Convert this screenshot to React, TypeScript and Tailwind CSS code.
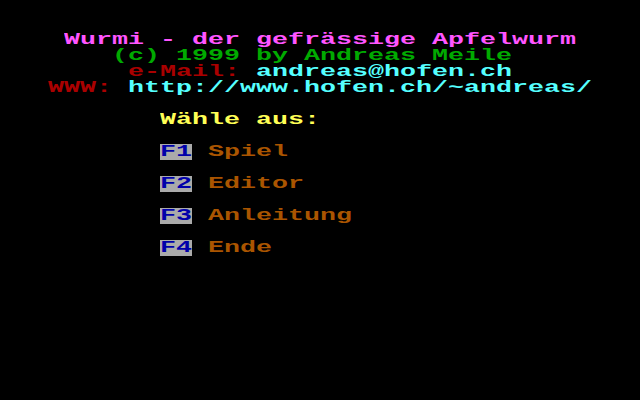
const Txt = ({ children, className = "" }: { children: React.ReactNode; className?: string }) => (
  <span
    className={`inline-block origin-left scale-x-[1.6667] whitespace-pre font-bold ${className}`}
  >
    {children}
  </span>
);

// one 16px text line of the 40x25 screen
const Row = ({ pad = "", children }: { pad?: string; children?: React.ReactNode }) => (
  <div className={`flex h-4 items-start leading-4 ${pad}`}>{children}</div>
);

const MENU = [
  { key: "F1", label: "Spiel" },
  { key: "F2", label: "Editor" },
  { key: "F3", label: "Anleitung" },
  { key: "F4", label: "Ende" },
];

export default function App() {
  return (
    <div className="h-[400px] w-[640px] overflow-hidden bg-black font-['Liberation_Mono',monospace] text-[16px]">
      <Row />
      <Row />
      <Row pad="pl-16">
        <Txt className="text-[#ff55ff]">Wurmi - der gefrässige Apfelwurm</Txt>
      </Row>
      <Row pad="pl-28">
        <Txt className="text-[#00aa00]">(c) 1999 by Andreas Meile</Txt>
      </Row>
      <Row pad="pl-32">
        <div className="w-32">
          <Txt className="text-[#aa0000]">e-Mail:</Txt>
        </div>
        <Txt className="text-[#55ffff]">andreas@hofen.ch</Txt>
      </Row>
      <Row pad="pl-12">
        <div className="w-20">
          <Txt className="text-[#aa0000]">WWW:</Txt>
        </div>
        <Txt className="text-[#55ffff]">http://www.hofen.ch/~andreas/</Txt>
      </Row>
      <Row />
      <Row pad="pl-40">
        <Txt className="text-[#ffff55]">Wähle aus:</Txt>
      </Row>
      {MENU.map((m) => (
        <div key={m.key}>
          <Row />
          <Row pad="pl-40">
            <div className="h-4 w-8 bg-[#aaaaaa]">
              <Txt className="text-[#0000aa]">{m.key}</Txt>
            </div>
            <div className="w-4" />
            <Txt className="text-[#aa5500]">{m.label}</Txt>
          </Row>
        </div>
      ))}
    </div>
  );
}
